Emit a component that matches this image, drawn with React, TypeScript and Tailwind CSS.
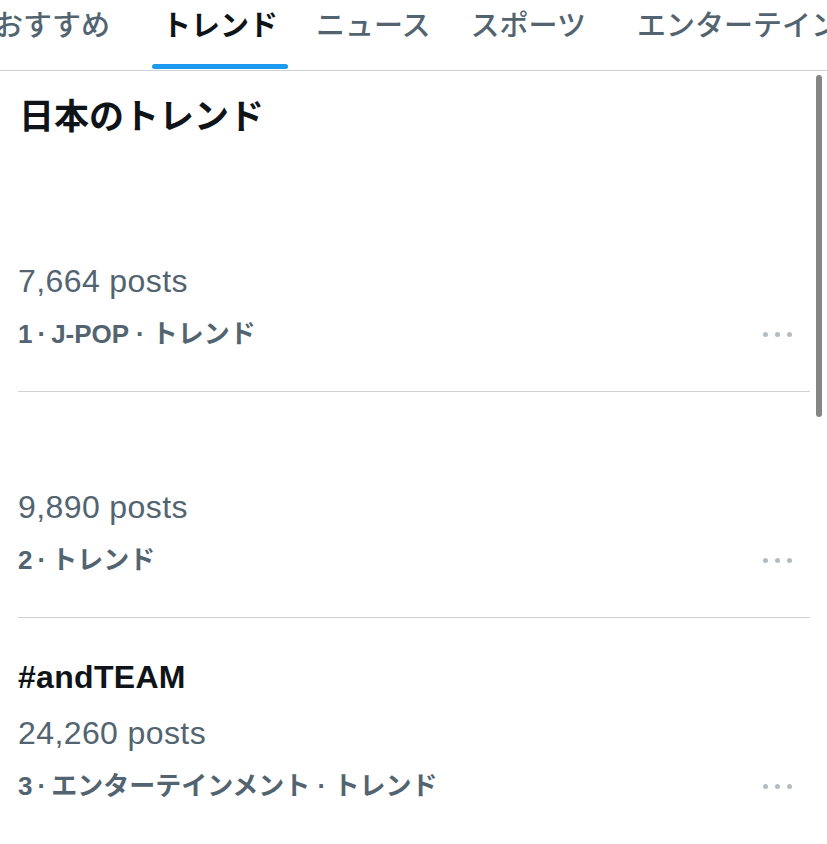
import React from 'react';

interface Trend {
    rank: number;
    title: string;
    posts: string;
    category: string;
}

const trends: Trend[] = [
    { rank: 1, title: '', posts: '7,664 posts', category: 'J-POP · トレンド' },
    { rank: 2, title: '', posts: '9,890 posts', category: 'トレンド' },
    { rank: 3, title: '#andTEAM', posts: '24,260 posts', category: 'エンターテインメント · トレンド' },
];

const tabs = ['おすすめ', 'トレンド', 'ニュース', 'スポーツ', 'エンターテインメント'];

const fontStack = { fontFamily: '"Liberation Sans", "Noto Sans CJK JP", sans-serif' };

const MoreDots: React.FC = () => (
    <div className="flex items-center gap-[7px] mr-[18px]">
        <span className="w-[5px] h-[5px] rounded-full bg-[#b4bcc2]"></span>
        <span className="w-[5px] h-[5px] rounded-full bg-[#b4bcc2]"></span>
        <span className="w-[5px] h-[5px] rounded-full bg-[#b4bcc2]"></span>
    </div>
);

const TrendRow: React.FC<{ trend: Trend; last: boolean }> = ({ trend, last }) => (
    <div className={`ml-[18px] mr-[17px] pt-[31px] pb-[32px] ${last ? '' : 'border-b border-[#cfd3d6]'}`}>
        <div className="h-[56px] flex items-center text-[32px] tracking-[0.3px] font-semibold text-[#0f1419]">
            {trend.title}
        </div>
        <div className="h-[56px] flex items-center text-[32px] tracking-[0.4px] text-[#536471]">{trend.posts}</div>
        <div className="h-[50px] flex items-center justify-between">
            <span className="text-[26px] font-semibold text-[#536471]">
                {trend.rank}<span className="mx-[5px]">·</span>{trend.category}
            </span>
            <MoreDots />
        </div>
    </div>
);

const App: React.FC = () => {
    return (
        <div className="relative w-[827px] h-[844px] overflow-hidden bg-white" style={fontStack}>
            {/* Tabs */}
            <div className="h-[71px] border-b border-[#cfd3d6] overflow-hidden">
                <div className="flex ml-[-26px] whitespace-nowrap">
                    {tabs.map((tab, i) => (
                        <div
                            key={tab}
                            className={`relative h-[70px] px-5 flex items-start pt-[5px] text-[29px] ${
                                i === 1 ? 'ml-3 font-bold text-[#0f1419]' : 'font-medium text-[#536471]'
                            } ${i === 2 ? 'ml-[-2px]' : ''} ${i === 4 ? 'ml-[11px]' : ''}`}
                        >
                            {tab}
                            {i === 1 && (
                                <span className="absolute left-[10px] right-[10px] bottom-[1px] h-[5px] rounded-full bg-[#1d9bf0]"></span>
                            )}
                        </div>
                    ))}
                </div>
            </div>

            {/* Heading */}
            <div className="h-[95px] pt-[26px] pl-[19px]">
                <h1 className="text-[35px] leading-[40px] font-bold text-[#0f1419]">日本のトレンド</h1>
            </div>

            {trends.map((t, i) => (
                <TrendRow key={t.rank} trend={t} last={i === trends.length - 1} />
            ))}

            {/* scrollbar */}
            <div className="absolute left-[816px] top-[75px] w-[6px] h-[342px] rounded-full bg-[#868686]"></div>
        </div>
    );
};

export default App;
